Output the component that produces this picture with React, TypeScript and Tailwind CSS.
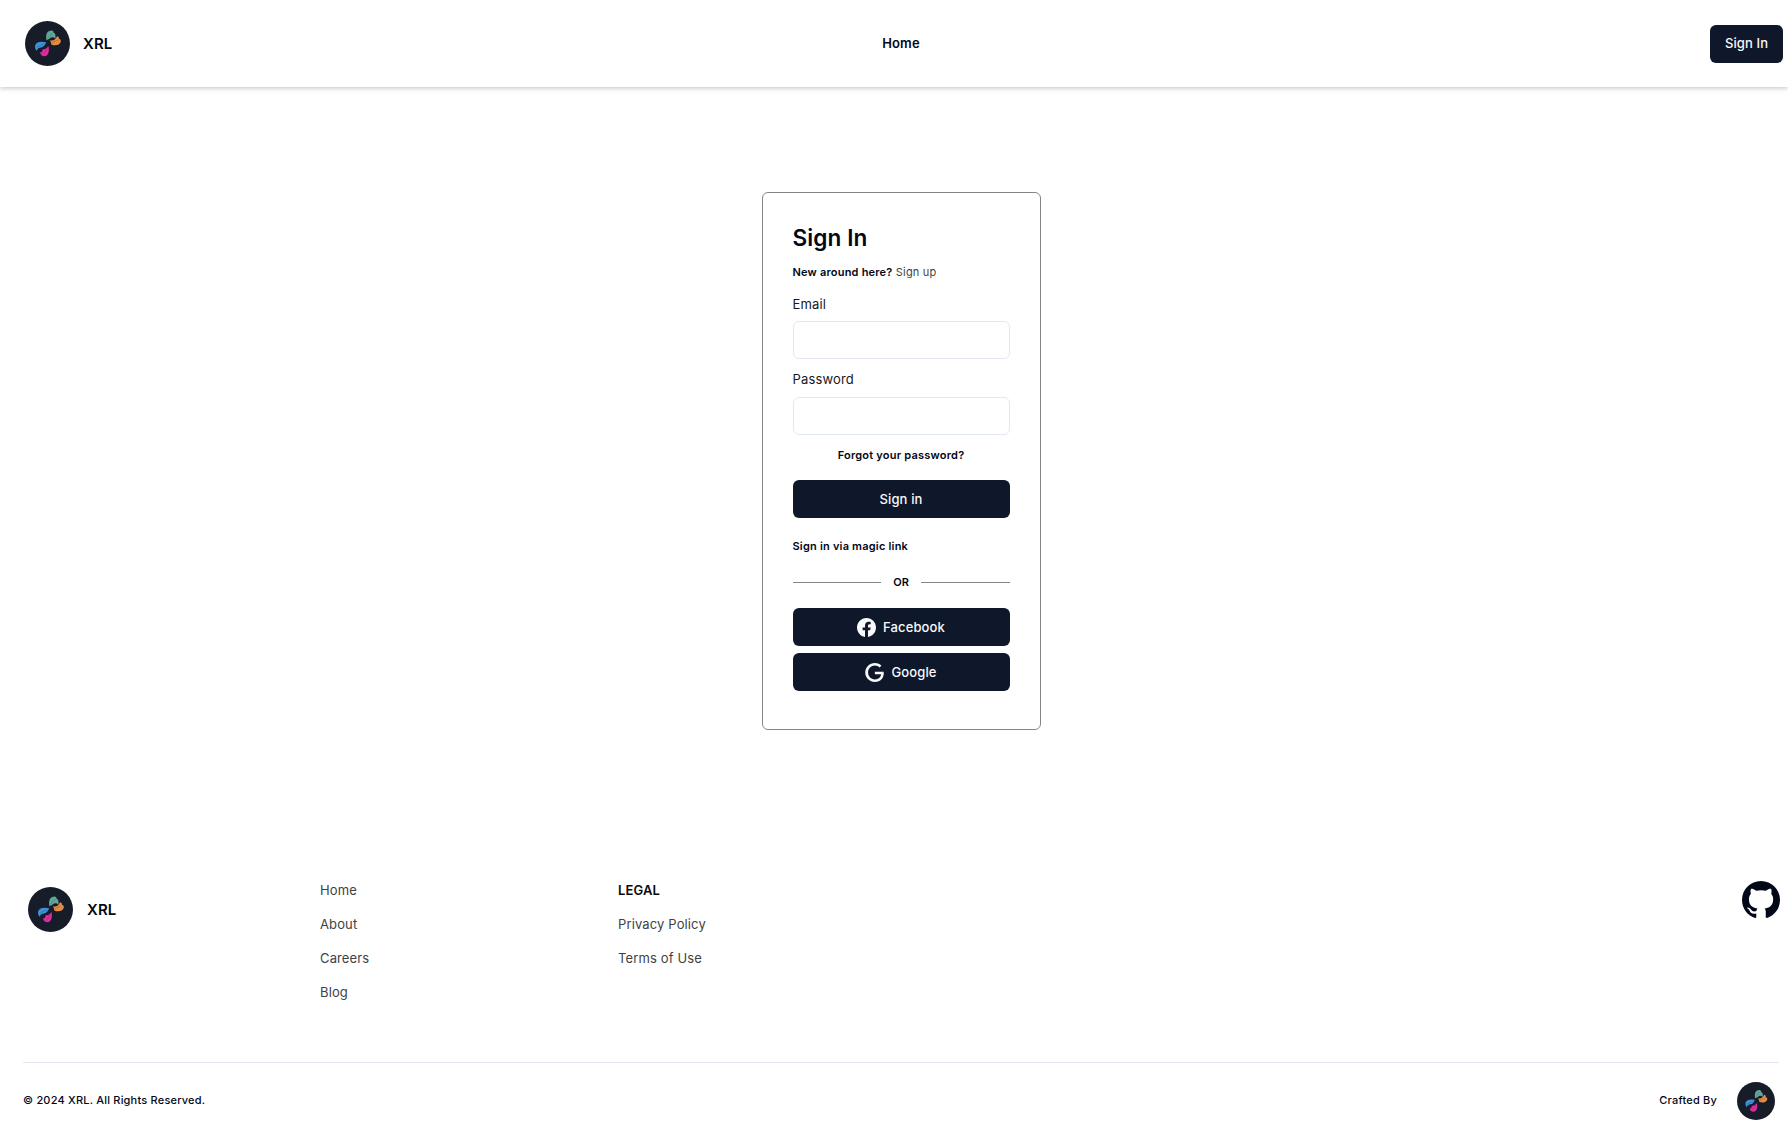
import type { ReactNode } from "react";
import { BsFacebook, BsGithub } from "react-icons/bs";

function Logo({ className }: { className: string }) {
  return (
    <svg viewBox="0 0 48 48" className={className} aria-hidden="true">
      <circle cx="24" cy="24" r="24" fill="#171c29" />
      <path d="M22.8 20.4C21.8 14.2 23.6 10.2 28.2 10.2C29.6 10.2 30.4 11 30.4 12.2C32.4 13 33 15.4 32.4 18.6C30 16.8 28.4 17 27 18.2C25.8 19.4 24.2 20 22.8 20.4Z" fill="#5fa796" />
      <path d="M26.2 20.4C29.6 21.6 32.6 20 34.2 16.2C36 16.6 36.6 17.8 36.2 19C38.2 19.6 38.8 21.2 37.8 23C36 26.6 31 26.4 28 25C28 22.8 27.4 21.6 26.2 20.4Z" fill="#e58a45" />
      <path d="M22.6 22.6C17.4 21.4 12 22 10.8 26C10.4 28 11 30.6 12.4 31.6C13.4 29.2 15.2 28.4 17.2 28.2C19.6 27.8 21.4 25.4 22.6 22.6Z" fill="#3f91d8" />
      <path d="M25 26.6C26.2 32 25.2 37.4 20.6 37.6C18.2 37.6 16.2 35.8 16 33.4C18.4 33.6 18.8 32.4 18.4 30.4C21 30.2 23.4 29.2 25 26.6Z" fill="#e22aa2" />
      <path d="M24 18.4L29.6 12.4M28.6 23.2L35.6 20M20.4 24L12.8 28M23.8 29.4L19.6 35.8" stroke="#171c29" strokeWidth=".7" opacity=".3" />
    </svg>
  );
}

function GoogleIcon() {
  return (
    <svg viewBox="0 0 24 24" className="size-[19px]" fill="currentColor" aria-hidden="true">
      <path d="M12.48 10.92v3.28h7.84c-.24 1.84-.853 3.187-1.787 4.133-1.147 1.147-2.933 2.4-6.053 2.4-4.827 0-8.6-3.893-8.6-8.72s3.773-8.72 8.6-8.72c2.6 0 4.507 1.027 5.907 2.347l2.307-2.307C18.747 1.44 16.133 0 12.48 0 5.867 0 .307 5.387.307 12s5.56 12 12.173 12c3.573 0 6.267-1.173 8.373-3.36 2.16-2.16 2.84-5.213 2.84-7.667 0-.76-.053-1.467-.173-2.053H12.48z" />
    </svg>
  );
}

function DarkButton({ icon, children, className }: { icon?: ReactNode; children: ReactNode; className: string }) {
  return (
    <button
      className={
        "flex h-[38px] shrink-0 items-center justify-center gap-[7px] rounded-[6px] bg-[#0f172a] text-[13px] font-medium tracking-[0.12px] text-slate-50 " +
        className
      }
    >
      {icon}
      <span className="pt-px">{children}</span>
    </button>
  );
}

function FooterLinks({ title, links, className }: { title?: string; links: string[]; className: string }) {
  return (
    <ul className={"flex flex-col gap-[14px] text-[13px] leading-5 tracking-[0.13px] text-[#3f3f46] " + className}>
      {title && <li className="font-semibold text-[#09090b]">{title}</li>}
      {links.map((link) => (
        <li key={link}>
          <a href="#">{link}</a>
        </li>
      ))}
    </ul>
  );
}

export default function App() {
  return (
    <div className="flex h-[1137px] w-full flex-col overflow-hidden bg-white font-['Inter',sans-serif] text-[#020817]">
      <header className="grid h-[87px] shrink-0 grid-cols-[1fr_auto_1fr] items-center pr-[5px] pl-[25px] shadow-[0_1px_5px_rgba(0,0,0,0.25)]">
        <a href="#" className="flex items-center gap-[13px] text-[15px] font-semibold tracking-[0.1px]">
          <Logo className="size-[45px]" />
          <span className="pt-px">XRL</span>
        </a>
        <a href="#" className="ml-[-6px] text-[13px] font-semibold tracking-[0.1px]">
          Home
        </a>
        <DarkButton className="w-[73px] justify-self-end">Sign In</DarkButton>
      </header>

      <main className="flex shrink-0 justify-center pt-[105px] pl-[14px]">
        <section className="flex h-[538px] w-[279px] flex-col rounded-[6px] border border-[#858585] px-[30px] pt-[28px]">
          <h1 className="h-[34px] text-[22.6px] leading-[34px] font-semibold tracking-[0.1px]">Sign In</h1>
          <p className="mt-[9px] text-[11px] leading-4 tracking-[0.2px]">
            <span className="font-semibold">New around here?</span>{" "}
            <a href="#" className="text-[#3f3f46]">
              Sign up
            </a>
          </p>
          <label className="mt-[14px] flex flex-col text-[13px] leading-5 tracking-[0.15px] text-[#18181b]">
            Email
            <input type="email" className="mt-[7px] h-[38px] w-full rounded-[6px] border border-slate-200 px-3" />
          </label>
          <label className="mt-[10px] flex flex-col text-[13px] leading-5 tracking-[0.15px] text-[#18181b]">
            Password
            <input type="password" className="mt-[8px] h-[38px] w-full rounded-[6px] border border-slate-200 px-3" />
          </label>
          <a href="#" className="mt-[12px] text-center text-[11px] leading-4 font-semibold tracking-[0.22px]">
            Forgot your password?
          </a>
          <DarkButton className="mt-[17px] w-full">Sign in</DarkButton>
          <a href="#" className="mt-[20px] text-[11px] leading-4 font-semibold tracking-[0.2px]">
            Sign in via magic link
          </a>
          <div className="mt-[20px] flex items-center text-[11px] leading-4 font-semibold">
            <span className="h-px flex-1 bg-[#858585]" />
            <span className="w-10 text-center">OR</span>
            <span className="h-px flex-1 bg-[#858585]" />
          </div>
          <DarkButton className="mt-[18px] w-full" icon={<BsFacebook size={19} />}>
            Facebook
          </DarkButton>
          <DarkButton className="mt-[7px] w-full" icon={<GoogleIcon />}>
            Google
          </DarkButton>
        </section>
      </main>

      <footer className="mt-[150px] flex flex-col pr-[9px] pl-[23px]">
        <div className="flex h-[182px] items-start">
          <a href="#" className="mt-[7px] ml-[5px] flex w-[292px] items-center gap-[14px] text-[15px] font-semibold tracking-[0.1px]">
            <Logo className="size-[45px]" />
            <span className="pt-px">XRL</span>
          </a>
          <FooterLinks className="w-[298px]" links={["Home", "About", "Careers", "Blog"]} />
          <FooterLinks className="" title="LEGAL" links={["Privacy Policy", "Terms of Use"]} />
          <a href="#" className="mt-px -mr-px ml-auto" aria-label="GitHub">
            <BsGithub size={38} />
          </a>
        </div>
        <div className="flex h-[76px] items-center justify-between border-t border-slate-200 pr-1 text-[11px] font-medium tracking-[0.2px]">
          <p>© 2024 XRL. All Rights Reserved.</p>
          <div className="flex items-center gap-[20px]">
            Crafted By
            <Logo className="size-[38px]" />
          </div>
        </div>
      </footer>
    </div>
  );
}
